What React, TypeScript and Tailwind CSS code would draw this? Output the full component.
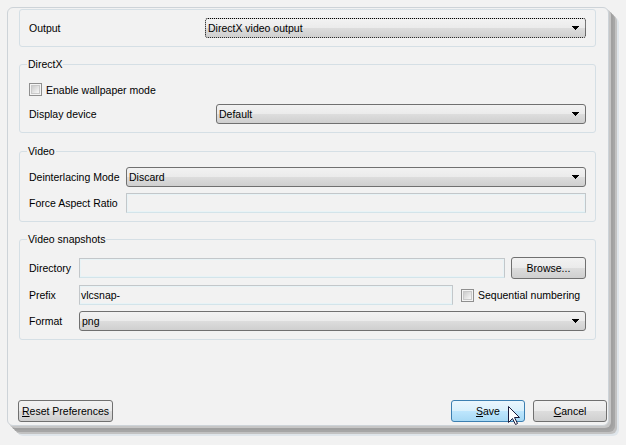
import React from "react";

function DropArrow() {
    return (
        <svg width="7" height="4" viewBox="0 0 7 4" shapeRendering="crispEdges" className="mr-[6px] shrink-0">
            <path d="M0 0h7v1h-1v1h-1v1h-1v1h-1v-1h-1v-1h-1v-1h-1z" fill="#000" />
        </svg>
    );
}

function Combo({ value, className, focused }: { value: string; className: string; focused?: boolean }) {
    return (
        <div
            className={`flex h-[20px] items-center rounded-[3px] border pl-[2px] bg-[linear-gradient(to_bottom,#f2f2f2_0%,#ebebeb_48%,#dddddd_50%,#cfcfcf_100%)] ${focused ? "border-dotted border-black" : "border-[#707070]"} ${className}`}
        >
            <span className="flex-1 leading-[14px]">{value}</span>
            <DropArrow />
        </div>
    );
}

function Field({ value, className }: { value?: string; className: string }) {
    return (
        <div className={`flex h-[20px] items-center border border-[#c3c7ca] border-b-[#d3e4ea] pl-[1px] shadow-[inset_0_0_0_1px_#e8f3f6] ${className}`}>
            {value && <span className="leading-[14px]">{value}</span>}
        </div>
    );
}

function CheckBox() {
    return (
        <span className="flex h-[13px] w-[13px] shrink-0 items-center justify-center border border-[#8f8f8f] bg-[#f4f4f4]">
            <span className="h-[9px] w-[9px] border border-[#c9c9c9] bg-[linear-gradient(135deg,#cbcbcb,#f8f8f8)]" />
        </span>
    );
}

function Button({ children, className, hot }: { children: React.ReactNode; className: string; hot?: boolean }) {
    return (
        <div
            className={`flex h-[22px] items-center justify-center rounded-[3px] border leading-[14px] ${hot
                ? "border-[#3c7fb1] bg-[linear-gradient(to_bottom,#eaf6fd_0%,#d9f0fc_48%,#bee6fd_50%,#a7d9f5_100%)]"
                : "border-[#707070] bg-[linear-gradient(to_bottom,#f2f2f2_0%,#ebebeb_48%,#dddddd_50%,#cfcfcf_100%)]"} ${className}`}
        >
            {children}
        </div>
    );
}

function Group({ title, className, children }: { title?: string; className: string; children: React.ReactNode }) {
    return (
        <div className={`relative w-[577px] rounded-[3px] border border-[#d5dfe5] px-[9px] ${className}`}>
            {title && (
                <span className="absolute -top-[8px] left-[7px] bg-[#f2f2f2] px-[1px] leading-[14px]">{title}</span>
            )}
            {children}
        </div>
    );
}

export default function App() {
    return (
        <div className="relative h-[445px] w-[626px] overflow-hidden bg-[#f2f2f2] pl-[7px] pt-[7px] font-['Liberation_Sans',Arial,sans-serif] text-[10.5px] text-black">
            <div className="flex h-[419px] w-[602px] flex-col rounded-[6px] border border-[#cdd3d8] bg-[#f2f2f2] shadow-[2px_2px_0_#c6c6c6,4px_4px_0_#a0a0a0,6px_6px_0_#a6a6a6,8px_8px_0_#c2c2c2,10px_10px_0_#dfe5ea]">
                <div className="ml-[11px] flex flex-col">
                    {/* output module */}
                    <Group className="mt-[1px] flex items-center justify-between py-[8px]">
                        <span className="leading-[14px]">Output</span>
                        <Combo value="DirectX video output" className="w-[381px]" focused />
                    </Group>

                    <Group title="DirectX" className="mt-[17px] flex flex-col pb-[8px] pt-[18px]">
                        <div className="flex h-[13px] items-center gap-[4px]">
                            <CheckBox />
                            <span className="leading-[14px]">Enable wallpaper mode</span>
                        </div>
                        <div className="mt-[8px] flex items-center justify-between">
                            <span className="leading-[14px]">Display device</span>
                            <Combo value="Default" className="w-[370px]" />
                        </div>
                    </Group>

                    <Group title="Video" className="mt-[18px] flex flex-col pb-[8px] pt-[15px]">
                        <div className="flex items-center justify-between">
                            <span className="leading-[14px]">Deinterlacing Mode</span>
                            <Combo value="Discard" className="w-[460px]" />
                        </div>
                        <div className="mt-[6px] flex items-center justify-between">
                            <span className="leading-[14px]">Force Aspect Ratio</span>
                            <Field className="w-[460px]" />
                        </div>
                    </Group>

                    <Group title="Video snapshots" className="mt-[17px] flex flex-col pb-[8px] pt-[17px]">
                        <div className="flex h-[21px] items-center">
                            <span className="w-[50px] leading-[14px]">Directory</span>
                            <Field className="w-[426px]" />
                            <Button className="ml-[6px] h-[21px] w-[75px]">Browse...</Button>
                        </div>
                        <div className="mt-[7px] flex h-[20px] items-center">
                            <span className="w-[50px] leading-[14px]">Prefix</span>
                            <Field value="vlcsnap-" className="w-[374px]" />
                            <span className="ml-[8px]">
                                <CheckBox />
                            </span>
                            <span className="ml-[4px] leading-[14px]">Sequential numbering</span>
                        </div>
                        <div className="mt-[6px] flex items-center">
                            <span className="w-[50px] leading-[14px]">Format</span>
                            <Combo value="png" className="w-[507px]" />
                        </div>
                    </Group>
                </div>

                <div className="ml-[10px] mt-[60px] flex w-[589px] items-center">
                    <Button className="w-[95px]">
                        <span><span className="underline">R</span>eset Preferences</span>
                    </Button>
                    <Button className="ml-auto w-[74px]" hot>
                        <span><span className="underline">S</span>ave</span>
                    </Button>
                    <Button className="ml-[8px] w-[74px]">
                        <span><span className="underline">C</span>ancel</span>
                    </Button>
                </div>
            </div>

            {/* mouse pointer hovering Save */}
            <svg width="13" height="20" viewBox="0 0 13 20" className="absolute left-[508px] top-[406px]">
                <path d="M0.5 0.5V16.5L4.5 12.5L7.5 18.5L9.5 17.5L6.5 11.5H11.5Z" fill="#fff" stroke="#1b1b3a" strokeWidth="1" strokeLinejoin="miter" />
            </svg>
        </div>
    );
}
